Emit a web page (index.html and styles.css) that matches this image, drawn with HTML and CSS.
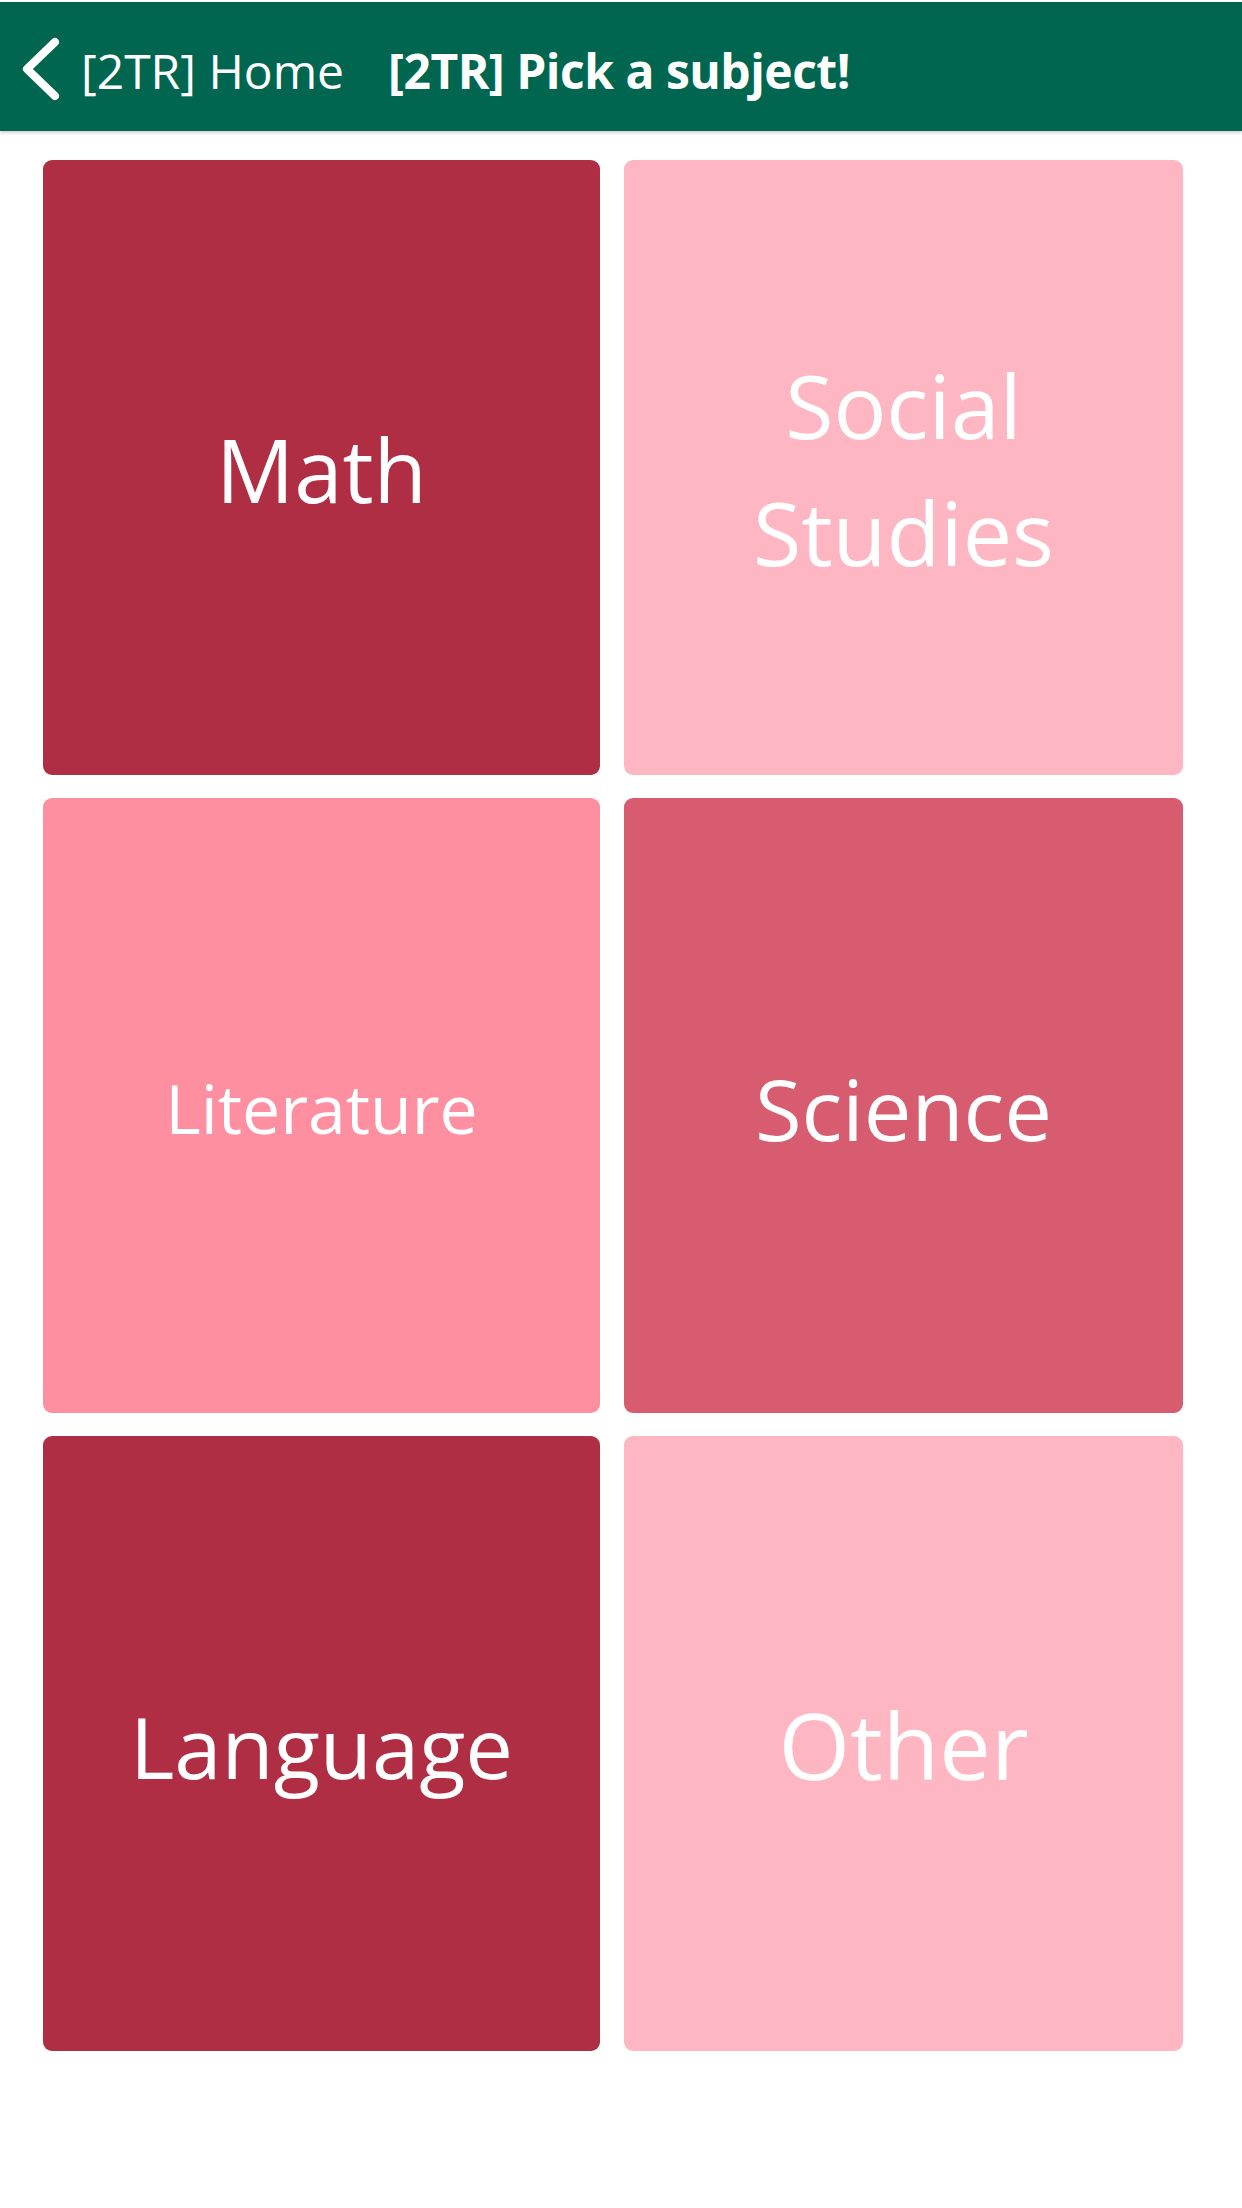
FILE: index.html
```html
<!DOCTYPE html>
<html lang="en">
<head>
<meta charset="utf-8">
<title>[2TR] Pick a subject!</title>
<link rel="stylesheet" href="styles.css">
</head>
<body>
<header class="topbar">
  <a class="back" href="#">
    <svg class="chevron" width="42" height="64" viewBox="0 0 42 64" aria-hidden="true">
      <polyline points="35,5 7,32 35,59" fill="none" stroke="#ffffff" stroke-width="8" stroke-linecap="round" stroke-linejoin="round"/>
    </svg>
    <span class="back-label">[2TR] Home</span>
  </a>
  <h1 class="title">[2TR] Pick a subject!</h1>
</header>
<main class="grid">
  <a class="tile tile--dark" href="#"><span class="label label--math">Math</span></a>
  <a class="tile tile--light" href="#"><span class="label label--social">Social<br>Studies</span></a>
  <a class="tile tile--mid" href="#"><span class="label label--lit">Literature</span></a>
  <a class="tile tile--rose" href="#"><span class="label label--sci">Science</span></a>
  <a class="tile tile--dark" href="#"><span class="label label--lang">Language</span></a>
  <a class="tile tile--light" href="#"><span class="label label--other">Other</span></a>
</main>
</body>
</html>
```
FILE: styles.css
```css
html, body {
  margin: 0;
  padding: 0;
  background: #ffffff;
}
body {
  font-family: "Open Sans", "Noto Sans", "Liberation Sans", sans-serif;
  color: #ffffff;
}
.topbar {
  margin-top: 2px;
  height: 129px;
  background: #006650;
  display: flex;
  align-items: center;
  padding: 8px 0 0 20px;
  box-shadow: 0 2px 3px rgba(0, 0, 0, 0.18);
  box-sizing: border-box;
}
.back {
  display: flex;
  align-items: center;
  color: #ffffff;
  text-decoration: none;
}
.chevron {
  display: block;
  margin-right: 19px;
  margin-top: -4px;
}
.back-label {
  font-size: 48px;
  font-weight: 400;
  line-height: 1;
}
.title {
  margin: 0 0 0 44px;
  font-size: 48px;
  font-weight: 700;
  line-height: 1;
  letter-spacing: -0.5px;
}
.grid {
  display: grid;
  grid-template-columns: 557px 559px;
  grid-auto-rows: 615px;
  column-gap: 24px;
  row-gap: 23px;
  padding: 29px 0 0 43px;
}
.tile {
  border-radius: 9px;
  display: flex;
  align-items: center;
  justify-content: center;
  text-align: center;
  color: #ffffff;
  text-decoration: none;
}
.tile--dark { background: #af2e44; }
.tile--light { background: #feb6c2; }
.tile--mid { background: #fd8fa0; }
.tile--rose { background: #d85c6f; }
.label {
  font-weight: 400;
  line-height: 1.2;
  padding-top: 4px;
}
.label--math { font-size: 87px; }
.label--social { font-size: 88px; line-height: 127px; padding-top: 2px; }
.label--lit { font-size: 68px; }
.label--sci { font-size: 85px; }
.label--lang { font-size: 85px; }
.label--other { font-size: 92px; }
```
